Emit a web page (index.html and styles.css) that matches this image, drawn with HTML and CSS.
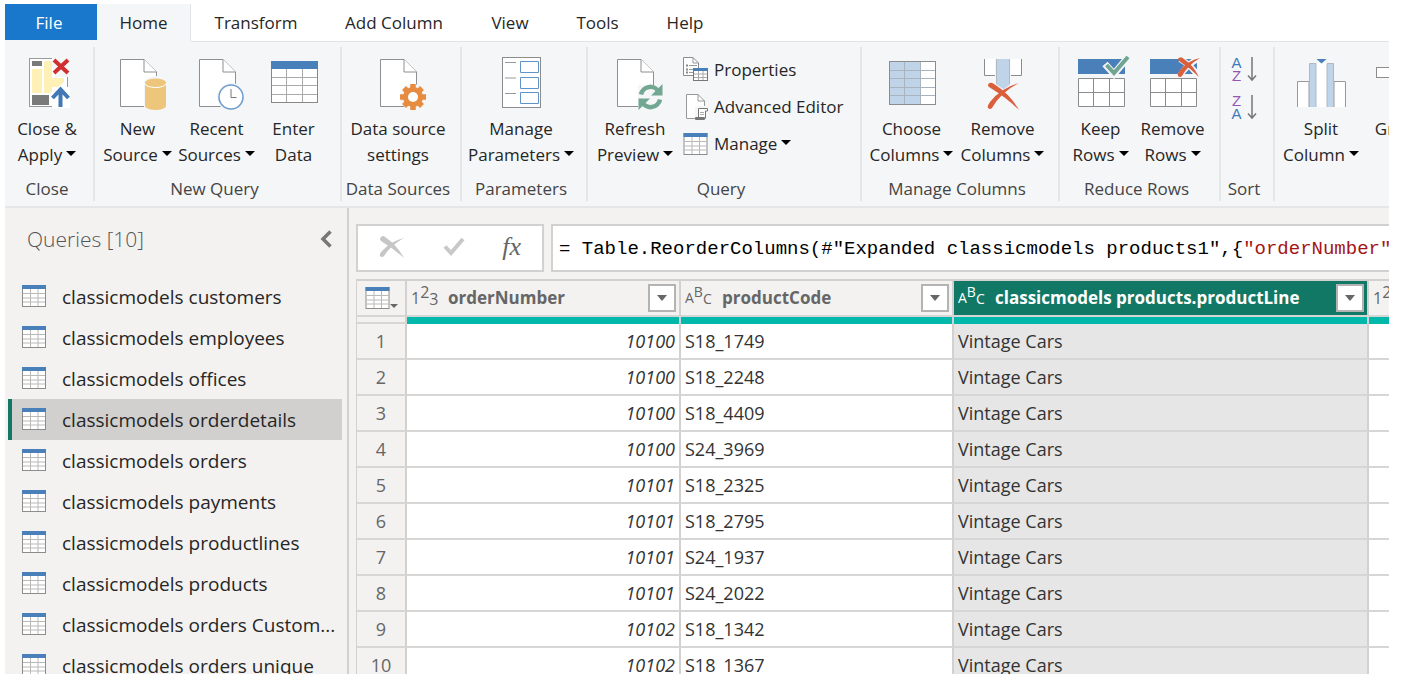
FILE: index.html
```html
<!DOCTYPE html>
<html lang="en">
<head>
<meta charset="utf-8">
<title>Power Query Editor</title>
<link rel="stylesheet" href="styles.css">
</head>
<body>
<svg class="defs" aria-hidden="true">
  <symbol id="table" viewBox="0 0 24 22">
    <rect x="0.5" y="0.5" width="23" height="21" fill="#fff" stroke="#8c8c8c"/>
    <path d="M8.5 4V21M16 4V21M1 8.5H23M1 13H23M1 17H23" stroke="#b9b9b9" fill="none"/>
    <rect width="24" height="4" fill="#4a80ba"/>
  </symbol>
  <symbol id="doc" viewBox="0 0 60 55">
    <path d="M12.5 3.5H36L48.500 16V50.500H12.500Z" fill="#fff" stroke="#8f8f8f"/>
    <path d="M36 3.500V16H48.500" fill="#fff" stroke="#8f8f8f"/>
  </symbol>
  <symbol id="rows" viewBox="0 0 60 55">
    <rect x="7" y="3" width="47" height="15" fill="#4a80ba"/>
    <path d="M7.500 22.500H53.500V50.500H7.500ZM22.500 22.500V50.500M38.500 22.500V50.500M7.500 36.500H53.500" fill="#fff" stroke="#8c8c8c"/>
  </symbol>
</svg>

<div class="app">
  <nav class="tabs">
    <button class="tab tab-file">File</button>
    <button class="tab tab-home">Home</button>
    <button class="tab tab-transform">Transform</button>
    <button class="tab tab-add">Add Column</button>
    <button class="tab">View</button>
    <button class="tab tab-tools">Tools</button>
    <button class="tab">Help</button>
    <span class="tab-rest"></span>
  </nav>

  <div class="ribbon">
    <section class="group g-close">
      <div class="tools">
        <button class="big w-close">
          <svg class="icon" viewBox="0 0 60 55">
            <rect x="12.500" y="2.500" width="38" height="48" fill="#fff" stroke="#9a9a9a"/>
            <rect x="15" y="5" width="10" height="5" fill="#7a7a7a"/>
            <rect x="15" y="13" width="10" height="24" fill="#fff0b5"/>
            <path d="M27 5H35V22H47V26L40 32L33 37H27Z" fill="#fff0b5"/>
            <rect x="15" y="39" width="17" height="10" fill="#7a7a7a"/>
            <path d="M35 0H54V21H38V14L35 11Z" fill="#f5f6f8"/>
            <path d="M35 31H53V52H35Z" fill="#fff"/>
            <path d="M37 4L51 17M51 4L37 17" stroke="#cf2f2f" stroke-width="4" fill="none"/>
            <path d="M43.500 51V34M35.500 42L43.500 33.500L51.500 42" stroke="#4178b5" stroke-width="4" fill="none"/>
          </svg>
          <span>Close &amp;</span><span>Apply<i class="caret"></i></span>
        </button>
      </div>
      <h2>Close</h2>
    </section>

    <section class="group g-new">
      <div class="tools">
        <button class="big w-source">
          <svg class="icon" viewBox="0 0 60 55">
            <use href="#doc"/>
            <path d="M36 26V55H60V26A12 6 0 0 0 36 26Z" fill="#f5f6f8"/>
            <path d="M37 26V50A10.500 4 0 0 0 58 50V26Z" fill="#edc67c"/>
            <ellipse cx="47.500" cy="26.500" rx="10.500" ry="4" fill="#edc67c"/>
            <path d="M37 27.500A10.500 4 0 0 0 58 27.500" stroke="#fff" fill="none"/>
          </svg>
          <span>New</span><span>Source<i class="caret"></i></span>
        </button>
        <button class="big w-source">
          <svg class="icon" viewBox="0 0 60 55">
            <use href="#doc"/>
            <circle cx="44" cy="41" r="14" fill="#f5f6f8"/>
            <circle cx="44" cy="41" r="12" fill="#fff" stroke="#6d9bcd" stroke-width="1.500"/>
            <path d="M44 33V41.500H49.500" stroke="#777" fill="none"/>
          </svg>
          <span>Recent</span><span>Sources<i class="caret"></i></span>
        </button>
        <button class="big w-enter">
          <svg class="icon" viewBox="0 0 60 55">
            <rect x="7.500" y="5.500" width="46" height="41" fill="#fff" stroke="#888"/>
            <path d="M22.500 13V46M38.500 13V46M8 21.500H53M8 29.500H53M8 38.500H53" stroke="#aaa" fill="none"/>
            <rect x="7" y="5" width="47" height="8" fill="#4a80ba"/>
          </svg>
          <span>Enter</span><span>Data</span>
        </button>
      </div>
      <h2>New Query</h2>
    </section>

    <section class="group g-data">
      <div class="tools">
        <button class="big">
          <svg class="icon" viewBox="0 0 60 55">
            <use href="#doc"/>
            <circle cx="45" cy="41" r="13" fill="#f5f6f8"/>
            <g stroke="#e68b3f" stroke-width="5.500">
              <path d="M45 28V54M32 41H58"/>
              <path d="M36 32L54 50M54 32L36 50"/>
            </g>
            <circle cx="45" cy="41" r="10" fill="#e68b3f"/>
            <circle cx="45" cy="41" r="5" fill="#fff"/>
          </svg>
          <span>Data source</span><span>settings</span>
        </button>
      </div>
      <h2>Data Sources</h2>
    </section>

    <section class="group g-params">
      <div class="tools">
        <button class="big">
          <svg class="icon" viewBox="0 0 60 55">
            <rect x="11.500" y="1.500" width="38" height="50" fill="#fff" stroke="#8c8c8c"/>
            <path d="M14 6.500H25M14 22H25M14 37.500H25" stroke="#999" fill="none"/>
            <path d="M29.500 5.500H47.500V16.500H29.500ZM29.500 21.500H47.500V32.500H29.500ZM29.500 36.500H47.500V47.500H29.500Z" stroke="#5f93c9" fill="none"/>
          </svg>
          <span>Manage</span><span>Parameters<i class="caret"></i></span>
        </button>
      </div>
      <h2>Parameters</h2>
    </section>

    <section class="group g-query">
      <div class="tools">
        <button class="big w-refresh">
          <svg class="icon" viewBox="0 0 60 55">
            <use href="#doc"/>
            <path d="M33 29H59V54H33Z" fill="#f5f6f8"/>
            <path d="M36 38.500A9.500 9.500 0 0 1 54 36.500M55 43.500A9.500 9.500 0 0 1 37 45.500" stroke="#72a892" stroke-width="4.500" fill="none"/>
            <path d="M57.500 28V39.500H46ZM33.500 54V42.500H45Z" fill="#72a892"/>
          </svg>
          <span>Refresh</span><span>Preview<i class="caret"></i></span>
        </button>
        <div class="stack">
          <button class="small">
            <svg width="25" height="25" viewBox="0 0 25 25">
              <path d="M0.500 0.500H10L15.500 6V18.500H0.500Z" fill="#fff" stroke="#8c8c8c"/>
              <path d="M10 0.500V6H15.500M6 8.500H14M6 12.500H10M6 15.500H10" fill="none" stroke="#999"/>
              <path d="M3 8.500H5M3 12.500H5M3 15.500H5" stroke="#888" stroke-width="2"/>
              <rect x="10.500" y="11.500" width="14" height="12" fill="#fff" stroke="#777"/>
              <path d="M15.500 14V23M20 14V23M11 17H24M11 20.500H24" stroke="#aaa"/>
              <rect x="10" y="11" width="15" height="3" fill="#4a80ba"/>
            </svg>
            <span>Properties</span>
          </button>
          <button class="small">
            <svg width="25" height="26" viewBox="0 0 25 26">
              <path d="M3.500 0.500H15L21.500 7V24.500H3.500Z" fill="#fff" stroke="#999"/>
              <path d="M15 0.500V7H21.500" fill="none" stroke="#999"/>
              <rect x="12" y="12" width="13" height="14" fill="#f5f6f8"/>
              <path d="M15.500 24V14.500H24.500V17H22.500V24.500" fill="#fff" stroke="#777"/>
              <path d="M17 18.500H21M17 20.500H21" stroke="#aaa"/>
              <rect x="12" y="23" width="10" height="3" rx="1" fill="#777"/>
            </svg>
            <span>Advanced Editor</span>
          </button>
          <button class="small">
            <svg width="25" height="22"><use href="#table"/></svg>
            <span>Manage<i class="caret"></i></span>
          </button>
        </div>
      </div>
      <h2>Query</h2>
    </section>

    <section class="group g-columns">
      <div class="tools">
        <button class="big w-columns">
          <svg class="icon" viewBox="0 0 60 55">
            <rect x="7.500" y="5.500" width="46" height="43" fill="#fff"/>
            <rect x="8" y="6" width="31" height="42" fill="#c0d4e9"/>
            <path d="M22.500 6V48M38.500 6V48M8 14.500H53M8 22.500H53M8 31.500H53M8 39.500H53" stroke="#aab4bf" fill="none"/>
            <rect x="7.500" y="5.500" width="46" height="43" fill="none" stroke="#8c8c8c"/>
          </svg>
          <span>Choose</span><span>Columns<i class="caret"></i></span>
        </button>
        <button class="big w-columns">
          <svg class="icon" viewBox="0 0 60 55">
            <path d="M11.500 3V19.500H22V3" fill="#fff"/>
            <path d="M37.500 3V19.500H48.500V3" fill="#fff"/>
            <path d="M11.500 3V19.500H22M38 19.500H48.500V3" fill="none" stroke="#8c8c8c"/>
            <path d="M23.500 3V30L30 35L36.500 30V3Z" fill="#c0d4e9"/>
            <path d="M23.500 3V28M36.500 3V28" stroke="#b0b8c0"/>
            <path d="M17 29C27 33 37 41 45 53M45 28C32 34 24 41 17 53" fill="none" stroke="#f5f6f8" stroke-width="6"/>
            <path d="M16 27.500Q18 26 21 28Q37 38 46 54Q34 42 16 31Q14 29 16 27.500Z" fill="#da5f3d"/>
            <path d="M46 27Q28 36 19 52Q17 54 15 52Q14 50 17 46Q28 32 46 27Z" fill="#da5f3d"/>
          </svg>
          <span>Remove</span><span>Columns<i class="caret"></i></span>
        </button>
      </div>
      <h2>Manage Columns</h2>
    </section>

    <section class="group g-rows">
      <div class="tools">
        <button class="big w-rows">
          <svg class="icon" viewBox="0 0 60 55">
            <use href="#rows"/>
            <path d="M34 8L43 18L58 0" fill="none" stroke="#f5f6f8" stroke-width="7"/>
            <path d="M35.500 9L43 17L57 1" fill="none" stroke="#6fa592" stroke-width="4"/>
          </svg>
          <span>Keep</span><span>Rows<i class="caret"></i></span>
        </button>
        <button class="big w-rows">
          <svg class="icon" viewBox="0 0 60 55">
            <use href="#rows"/>
            <path d="M37 3Q48 9 55 20M56 2Q43 9 37 20" fill="none" stroke="#f5f6f8" stroke-width="6"/>
            <path d="M36 2Q38 0 41 3Q50 9 56 21Q47 12 36 5Q34 3 36 2Z" fill="#da5f3d"/>
            <path d="M57 2Q45 9 39 20Q37 22 35 20Q34 18 37 14Q46 4 57 2Z" fill="#da5f3d"/>
          </svg>
          <span>Remove</span><span>Rows<i class="caret"></i></span>
        </button>
      </div>
      <h2>Reduce Rows</h2>
    </section>

    <section class="group g-sort">
      <div class="tools sorts">
        <button class="sort" aria-label="Sort ascending">
          <span class="letters"><span class="sort-a">A</span><span class="sort-z">Z</span></span>
          <svg width="10" height="26" viewBox="0 0 10 26">
            <path d="M5 1V24M1 19.500L5 24L9 19.500" stroke="#777" stroke-width="1.500" fill="none"/>
          </svg>
        </button>
        <button class="sort" aria-label="Sort descending">
          <span class="letters"><span class="sort-z">Z</span><span class="sort-a">A</span></span>
          <svg width="10" height="26" viewBox="0 0 10 26">
            <path d="M5 1V24M1 19.500L5 24L9 19.500" stroke="#777" stroke-width="1.500" fill="none"/>
          </svg>
        </button>
      </div>
      <h2>Sort</h2>
    </section>

    <section class="group g-transform">
      <div class="tools">
        <button class="big w-split">
          <svg class="icon" viewBox="0 0 60 55">
            <path d="M6.500 51V25.500H18V51M43 51V25.500H54.500V51" fill="#fff" stroke="#999"/>
            <path d="M25 7H36V51H25Z" fill="#fff"/>
            <path d="M18.500 51V7.500H25V51M36 51V7.500H42.500V51" fill="#c0d4e9" stroke="#b0b8c0"/>
            <path d="M25.500 3H35.500L30.500 7.500Z" fill="#4a80ba"/>
          </svg>
          <span>Split</span><span>Column<i class="caret"></i></span>
        </button>
        <button class="big w-group">
          <svg class="icon" viewBox="0 0 60 55">
            <rect x="6.500" y="11.500" width="22" height="10" fill="#fff" stroke="#8c8c8c"/>
            <rect x="19.500" y="32.500" width="24" height="9" fill="#fff" stroke="#8c8c8c"/>
          </svg>
          <span>Group</span><span>By</span>
        </button>
      </div>
    </section>
  </div>

  <div class="work">
    <aside class="queries">
      <header class="queries-head">
        <h1>Queries [10]</h1>
        <button class="collapse" aria-label="Collapse queries">
          <svg width="12" height="18" viewBox="0 0 12 18"><path d="M10.500 1.500L3 9L10.500 16.500" fill="none" stroke="#777" stroke-width="3.500"/></svg>
        </button>
      </header>
      <ul class="query-list">
        <li><button class="query"><svg width="24" height="22"><use href="#table"/></svg><span>classicmodels customers</span></button></li>
        <li><button class="query"><svg width="24" height="22"><use href="#table"/></svg><span>classicmodels employees</span></button></li>
        <li><button class="query"><svg width="24" height="22"><use href="#table"/></svg><span>classicmodels offices</span></button></li>
        <li><button class="query selected"><svg width="24" height="22"><use href="#table"/></svg><span>classicmodels orderdetails</span></button></li>
        <li><button class="query"><svg width="24" height="22"><use href="#table"/></svg><span>classicmodels orders</span></button></li>
        <li><button class="query"><svg width="24" height="22"><use href="#table"/></svg><span>classicmodels payments</span></button></li>
        <li><button class="query"><svg width="24" height="22"><use href="#table"/></svg><span>classicmodels productlines</span></button></li>
        <li><button class="query"><svg width="24" height="22"><use href="#table"/></svg><span>classicmodels products</span></button></li>
        <li><button class="query"><svg width="24" height="22"><use href="#table"/></svg><span>classicmodels orders Custom...</span></button></li>
        <li><button class="query"><svg width="24" height="22"><use href="#table"/></svg><span>classicmodels orders unique</span></button></li>
      </ul>
    </aside>

    <main class="editor">
      <div class="formula-row">
        <div class="formula-actions">
          <button aria-label="Cancel">
            <svg width="26" height="24" viewBox="0 0 26 24">
              <path d="M2 2Q4 0 6 2Q18 10 25 23Q15 14 2 6Q0 4 2 2Z" fill="#c6c6c6"/>
              <path d="M25 3Q12 10 5 21Q3 23 1 21Q0 19 3 16Q12 6 25 3Z" fill="#c6c6c6"/>
            </svg>
          </button>
          <button aria-label="Accept">
            <svg width="22" height="20" viewBox="0 0 22 20"><path d="M2 9.500L8 16L20 2" fill="none" stroke="#c8c8c8" stroke-width="4"/></svg>
          </button>
          <button class="fx">fx</button>
        </div>
        <div class="formula" role="textbox" aria-label="Formula" contenteditable="true" spellcheck="false">= Table.ReorderColumns(#"Expanded classicmodels products1",{<span class="str">"orderNumber"</span></div>
      </div>

      <div class="grid-wrap">
        <table class="grid">
          <colgroup><col class="c-num"><col class="c-order"><col class="c-code"><col class="c-line"><col class="c-next"></colgroup>
          <thead>
            <tr>
              <th class="corner"><button aria-label="Table options"><svg width="25" height="22"><use href="#table"/></svg><i class="caret caret-grey"></i></button></th>
              <th><div class="head"><span class="type">1<sup>2</sup><sub>3</sub></span><span class="name">orderNumber</span><button class="filter" aria-label="Filter orderNumber"></button></div></th>
              <th><div class="head"><span class="type abc">A<sup>B</sup><sub>C</sub></span><span class="name">productCode</span><button class="filter" aria-label="Filter productCode"></button></div></th>
              <th class="active"><div class="head"><span class="type abc">A<sup>B</sup><sub>C</sub></span><span class="name">classicmodels products.productLine</span><button class="filter" aria-label="Filter productLine"></button></div></th>
              <th><div class="head"><span class="type">1<sup>2</sup><sub>3</sub></span></div></th>
            </tr>
            <tr class="quality"><td></td><td></td><td></td><td></td><td></td></tr>
          </thead>
          <tbody>
            <tr><th>1</th><td>10100</td><td>S18_1749</td><td>Vintage Cars</td><td></td></tr>
            <tr><th>2</th><td>10100</td><td>S18_2248</td><td>Vintage Cars</td><td></td></tr>
            <tr><th>3</th><td>10100</td><td>S18_4409</td><td>Vintage Cars</td><td></td></tr>
            <tr><th>4</th><td>10100</td><td>S24_3969</td><td>Vintage Cars</td><td></td></tr>
            <tr><th>5</th><td>10101</td><td>S18_2325</td><td>Vintage Cars</td><td></td></tr>
            <tr><th>6</th><td>10101</td><td>S18_2795</td><td>Vintage Cars</td><td></td></tr>
            <tr><th>7</th><td>10101</td><td>S24_1937</td><td>Vintage Cars</td><td></td></tr>
            <tr><th>8</th><td>10101</td><td>S24_2022</td><td>Vintage Cars</td><td></td></tr>
            <tr><th>9</th><td>10102</td><td>S18_1342</td><td>Vintage Cars</td><td></td></tr>
            <tr><th>10</th><td>10102</td><td>S18_1367</td><td>Vintage Cars</td><td></td></tr>
          </tbody>
        </table>
      </div>
    </main>
  </div>
</div>
</body>
</html>
```

FILE: styles.css
```css
* { box-sizing: border-box; }
body {
  margin: 0;
  padding: 4px 17px 8px 5px;
  height: 100vh;
  overflow: hidden;
  background: #fff;
  color: #262626;
  font-family: "Open Sans", "Noto Sans", sans-serif;
  font-size: 17px;
}
button {
  margin: 0;
  padding: 0;
  border: 0;
  background: none;
  color: inherit;
  font: inherit;
  white-space: nowrap;
}
h1, h2, ul { margin: 0; padding: 0; font-weight: 400; list-style: none; }
svg { display: block; flex: none; }
.defs { position: absolute; width: 0; height: 0; }
.app { display: flex; flex-direction: column; height: 100%; overflow: hidden; }

/* Tab strip */
.tabs { display: flex; flex: none; height: 38px; }
.tab { flex: none; width: 86px; border-bottom: 1px solid #e1e3e6; }
.tab-file { width: 92px; padding-right: 4px; background: #1a78cc; color: #fff; border-bottom: 2px solid #f5f6f8; }
.tab-home { width: 94px; background: #f5f6f8; border-right: 1px solid #e1e3e6; border-bottom-color: #f5f6f8; }
.tab-transform { width: 130px; }
.tab-add { width: 146px; }
.tab-tools { width: 89px; }
.tab-rest { flex: 1; border-bottom: 1px solid #e1e3e6; }

/* Ribbon */
.ribbon {
  display: flex;
  flex: none;
  height: 166px;
  padding: 5px 0;
  overflow: hidden;
  background: #f5f6f8;
  border-bottom: 2px solid #e4e6e8;
}
.group {
  display: flex;
  flex: none;
  flex-direction: column;
  padding: 0 8px 0 2px;
  border-right: 2px solid #e4e6e8;
}
.group h2 { align-self: center; color: #444; font-size: 17px; line-height: 24px; white-space: nowrap; }
.tools { display: flex; flex: 1; justify-content: center; }
.g-close { width: 90px; padding: 0 4px 0 0; }
.g-new { width: 247px; }
.g-data { width: 120px; }
.g-params { width: 126px; }
.g-query { width: 274px; }
.g-columns { width: 198px; }
.g-rows { width: 161px; }
.g-sort { width: 54px; }
.g-transform { padding: 0; border: 0; }
.big {
  display: flex;
  flex: none;
  flex-direction: column;
  align-items: center;
  justify-content: flex-start;
  padding-top: 9px;
  line-height: 26px;
}
.icon { width: 60px; height: 55px; margin-bottom: 5px; }
.w-close { width: 84px; }
.w-source { width: 79px; }
.w-enter { width: 75px; }
.w-refresh { width: 90px; }
.w-columns { width: 91px; }
.w-rows { width: 72px; }
.w-split { width: 92px; }
.w-group { width: 66px; }
.caret {
  display: inline-block;
  margin-left: 4px;
  border: 5px solid transparent;
  border-top-color: #000;
  border-bottom: 0;
  vertical-align: 5px;
}
.stack { display: flex; flex: 1; flex-direction: column; padding: 4px 0 0 3px; }
.small { display: flex; align-items: center; gap: 6px; height: 37px; }
.sorts { flex-direction: column; align-items: center; justify-content: flex-start; padding-top: 9px; gap: 12px; }
.sort { display: flex; gap: 5px; }
.letters {
  display: flex;
  flex-direction: column;
  align-items: center;
  font-family: "Liberation Sans", sans-serif;
  font-size: 15px;
  line-height: 13px;
}
.sort-a { color: #3f7abb; }
.sort-z { color: #9256b5; }

/* Queries pane */
.work { display: flex; flex: 1; min-height: 0; background: #f3f2f1; }
.queries { flex: none; width: 344px; border-right: 2px solid #d2d1d0; overflow: hidden; }
.queries-head {
  display: flex;
  align-items: center;
  justify-content: space-between;
  height: 68px;
  padding: 0 15px 6px 22px;
}
.queries-head h1 { color: #555; font-size: 21px; font-weight: 300; }
.query-list { padding: 0 5px 0 3px; }
.query {
  display: flex;
  align-items: center;
  gap: 16px;
  width: 100%;
  height: 41px;
  padding-left: 10px;
  border-left: 4px solid transparent;
  font-size: 19px;
}
.query span { padding-top: 1px; }
.query svg { margin-bottom: 1px; }
.selected { background: #d1d0ce; border-left-color: #117865; }

/* Formula bar */
.editor { display: flex; flex: 1; flex-direction: column; min-width: 0; padding: 16px 0 0 7px; }
.formula-row { display: flex; flex: none; gap: 7px; height: 48px; }
.formula-actions {
  display: flex;
  flex: none;
  align-items: center;
  justify-content: space-between;
  width: 188px;
  padding: 0 21px 2px 21px;
  background: #fff;
  border: 2px solid #d2d1d0;
}
.fx { color: #666; font-family: "Liberation Serif", serif; font-size: 26px; font-style: italic; line-height: 30px; }
.formula {
  flex: 1;
  min-width: 0;
  padding-left: 6px;
  overflow: hidden;
  background: #fff;
  border: 2px solid #d2d1d0;
  border-right: 0;
  color: #000;
  font-family: "Liberation Mono", monospace;
  font-size: 19px;
  line-height: 46px;
  white-space: pre;
}
.str { color: #a31515; }

/* Data grid */
.grid-wrap { flex: 1; min-height: 0; margin-top: 7px; overflow: hidden; }
.grid {
  width: 100%;
  table-layout: fixed;
  border-collapse: separate;
  border-spacing: 0;
  border-top: 2px solid #d2d1d0;
  border-left: 1px solid #d2d1d0;
}
.c-num { width: 50px; }
.c-order { width: 274px; }
.c-code { width: 273px; }
.c-line { width: 415px; }
.grid th, .grid td {
  height: 36px;
  padding: 0 4px;
  overflow: hidden;
  border-right: 2px solid #d2d1d0;
  border-bottom: 2px solid #d6d6d6;
  background: #fff;
  color: #333;
  text-align: left;
  line-height: 24px;
  white-space: nowrap;
}
.grid th { background: #f3f2f1; color: #666; }
.grid tbody th { padding: 0; text-align: center; font-size: 18px; font-weight: 400; }
.grid tbody td { font-size: 18px; }
.grid tbody td:nth-child(2) { text-align: right; font-style: italic; }
.grid tbody td:nth-child(4) { background: #e6e6e6; }
.grid tr > :last-child { border-right: 0; }
.grid .quality td { height: 7px; padding: 0; background: #01b8aa; border-bottom: 0; }
.grid .quality td:first-child { background: #f3f2f1; border-bottom: 2px solid #d6d6d6; }
.corner button { display: flex; align-items: flex-end; margin-left: 4px; }
.corner .caret { margin: 0 0 1px; border-width: 4px; border-bottom: 0; }
.corner .caret-grey { border-top-color: #666; }
.grid thead th { padding-right: 3px; }
.head { display: flex; align-items: center; height: 34px; }
.type { flex: none; width: 37px; font-size: 16px; font-weight: 400; }
.type sup, .type sub { font-size: inherit; line-height: 0; }
.type sup { vertical-align: 6px; }
.type sub { vertical-align: -1px; }
.type.abc { font-size: 14px; }
.name { flex: 1; font-weight: 700; }
.grid .active { background: #117865; color: #fff; }
.filter {
  display: flex;
  align-items: center;
  justify-content: center;
  width: 28px;
  height: 28px;
  background: #fff;
  border: 2px solid #b3b3b3;
}
.filter::after { content: ""; border: 5px solid transparent; border-top: 6px solid #666; border-bottom: 0; }
```
